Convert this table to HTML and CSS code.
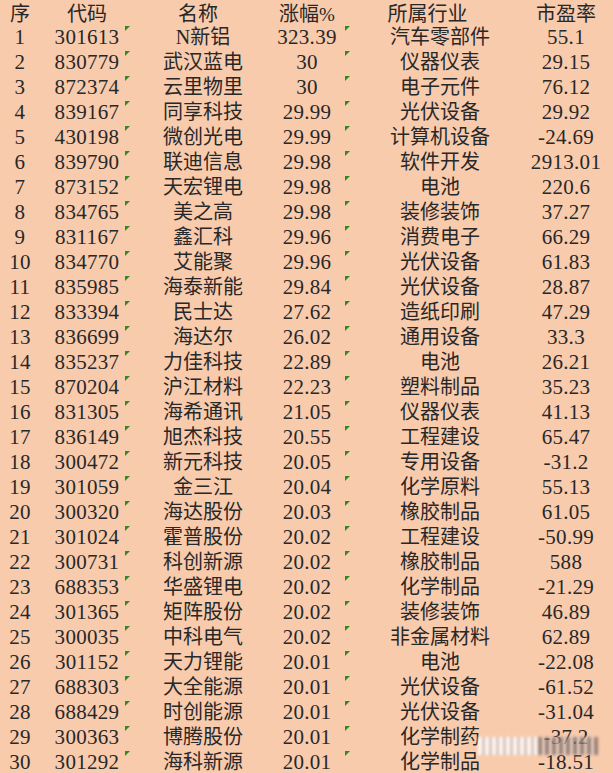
FILE: index.html
```html
<!DOCTYPE html>
<html lang="zh">
<head>
<meta charset="utf-8">
<title>涨幅榜</title>
<link rel="stylesheet" href="styles.css">
</head>
<body>
<div class="sheet" id="sheet">
  <div class="row head">
    <div class="cell">序</div>
    <div class="cell">代码</div>
    <div class="cell h-name">名称</div>
    <div class="cell">涨幅<span class="pct">%</span></div>
    <div class="cell h-ind">所属行业</div>
    <div class="cell">市盈率</div>
  </div>
</div>
<div class="watermark" aria-hidden="true"><span class="wm-light"></span><span class="wm-dark"></span></div>
<script src="app.js"></script>
</body>
</html>
```
FILE: app.js
```js
var data = [
["1","301613","N新铝","323.39","汽车零部件","55.1"],
["2","830779","武汉蓝电","30","仪器仪表","29.15"],
["3","872374","云里物里","30","电子元件","76.12"],
["4","839167","同享科技","29.99","光伏设备","29.92"],
["5","430198","微创光电","29.99","计算机设备","-24.69"],
["6","839790","联迪信息","29.98","软件开发","2913.01"],
["7","873152","天宏锂电","29.98","电池","220.6"],
["8","834765","美之高","29.98","装修装饰","37.27"],
["9","831167","鑫汇科","29.96","消费电子","66.29"],
["10","834770","艾能聚","29.96","光伏设备","61.83"],
["11","835985","海泰新能","29.84","光伏设备","28.87"],
["12","833394","民士达","27.62","造纸印刷","47.29"],
["13","836699","海达尔","26.02","通用设备","33.3"],
["14","835237","力佳科技","22.89","电池","26.21"],
["15","870204","沪江材料","22.23","塑料制品","35.23"],
["16","831305","海希通讯","21.05","仪器仪表","41.13"],
["17","836149","旭杰科技","20.55","工程建设","65.47"],
["18","300472","新元科技","20.05","专用设备","-31.2"],
["19","301059","金三江","20.04","化学原料","55.13"],
["20","300320","海达股份","20.03","橡胶制品","61.05"],
["21","301024","霍普股份","20.02","工程建设","-50.99"],
["22","300731","科创新源","20.02","橡胶制品","588"],
["23","688353","华盛锂电","20.02","化学制品","-21.29"],
["24","301365","矩阵股份","20.02","装修装饰","46.89"],
["25","300035","中科电气","20.02","非金属材料","62.89"],
["26","301152","天力锂能","20.01","电池","-22.08"],
["27","688303","大全能源","20.01","光伏设备","-61.52"],
["28","688429","时创能源","20.01","光伏设备","-31.04"],
["29","300363","博腾股份","20.01","化学制药","-37.2"],
["30","301292","海科新源","20.01","化学制品","-18.51"]
];
var sheet = document.getElementById("sheet");
var classes = ["cell num", "cell num tri tri-code", "cell", "cell num tri tri-pct", "cell", "cell num"];
data.forEach(function (r) {
  var row = document.createElement("div");
  row.className = "row";
  r.forEach(function (v, i) {
    var c = document.createElement("div");
    c.className = classes[i];
    c.textContent = v;
    row.appendChild(c);
  });
  sheet.appendChild(row);
});
```
FILE: styles.css
```css
html, body {
  margin: 0;
  padding: 0;
  background: #f8cbad;
}
body {
  width: 613px;
  height: 773px;
  overflow: hidden;
  position: relative;
  font-family: "Liberation Serif", "Noto Sans CJK SC", serif;
  color: #282828;
}
.sheet {
  display: flex;
  flex-direction: column;
}
.row {
  display: grid;
  grid-template-columns: 40px 94px 138px 70px 196px 56px;
  height: 25px;
}
.cell {
  position: relative;
  display: flex;
  justify-content: center;
  align-items: center;
  white-space: nowrap;
  font-size: 20px;
  line-height: 25px;
}
.num {
  font-size: 21px;
  letter-spacing: 0.3px;
}
.head .cell {
  padding-top: 2px;
}
.pct {
  font-size: 19px;
}
.h-name {
  padding-right: 10px;
}
.h-ind {
  padding-right: 25px;
}
.tri::after {
  content: "";
  position: absolute;
  top: 1px;
  width: 0;
  height: 0;
  border-top: 5px solid #2f8a22;
  border-right: 5px solid transparent;
}
.tri-code::after {
  left: 85px;
}
.tri-pct::after {
  left: 73px;
}
.watermark {
  position: absolute;
  left: 478px;
  top: 737px;
  width: 120px;
  height: 18px;
  display: flex;
  filter: blur(1.5px);
}
.wm-light {
  width: 60px;
  height: 100%;
  background: repeating-linear-gradient(90deg, rgba(255,255,255,0.85) 0 4px, rgba(200,190,190,0.7) 4px 7px);
}
.wm-dark {
  flex: 1;
  height: 100%;
  background: repeating-linear-gradient(90deg, rgba(120,100,95,0.75) 0 4px, rgba(230,215,210,0.7) 4px 7px);
}
```
